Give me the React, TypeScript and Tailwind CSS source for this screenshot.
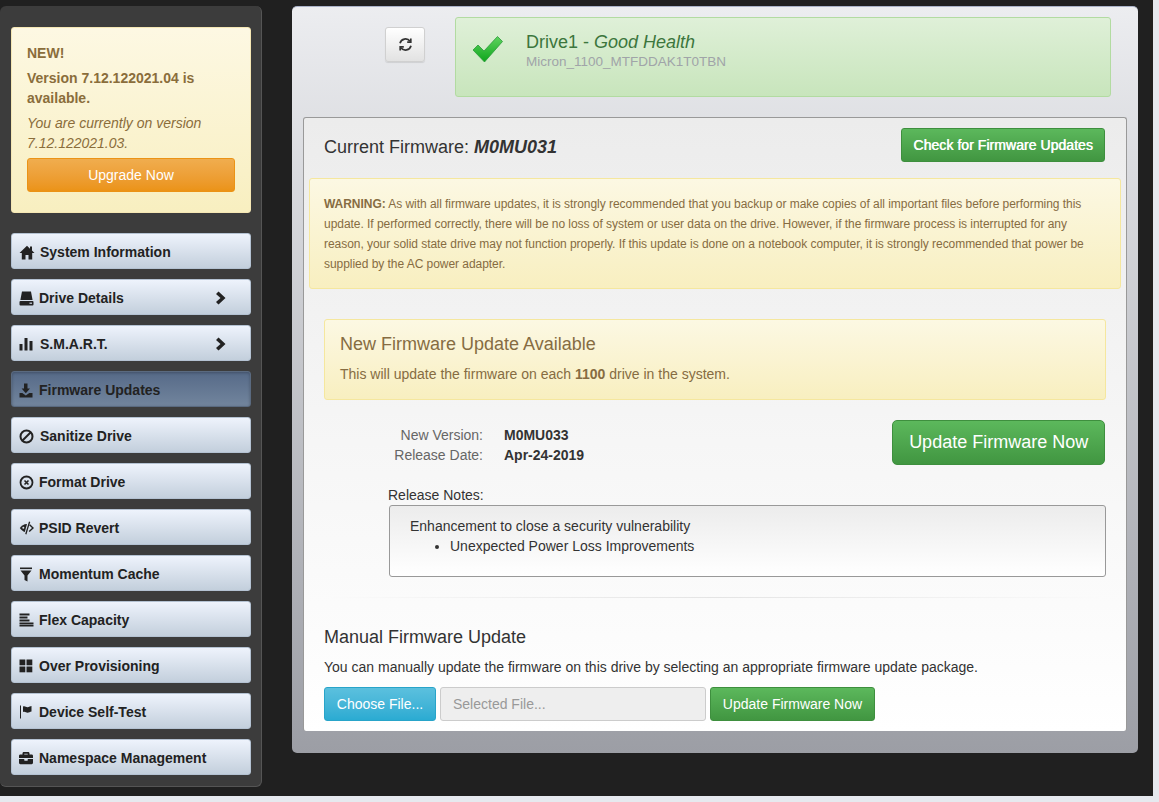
import React from "react";
import { FaBriefcase } from "react-icons/fa";

const Home = () => (
  <svg width="16" height="15" viewBox="0 0 16 15" fill="#222"><path d="M8 0.800L0.500 8h2.300v6.500h3.700V10h3v4.500h3.700V8h2.300l-2.500-2.400V1.500h-2v2.200z" /></svg>
);
const Hdd = () => (
  <svg width="15" height="15" viewBox="0 0 15 15" fill="#222"><path d="M3 0.500h9l1.600 8.500H1.400z" /><rect x="0.500" y="10" width="14" height="4.500" rx="1" /><rect x="10.500" y="11.600" width="2.500" height="1.200" fill="#cfd8e4" /></svg>
);
const Bars = () => (
  <svg width="14" height="14" viewBox="0 0 14 14" fill="#222"><rect x="0.500" y="7" width="3" height="6.500" /><rect x="5.500" y="1" width="3" height="12.500" /><rect x="10.500" y="4" width="3" height="9.500" /></svg>
);
const Download = () => (
  <svg width="14" height="15" viewBox="0 0 14 15" fill="#222"><path d="M5 0.500h3.500v5H11L6.800 10.300 2.600 5.500H5z" /><path d="M0.500 10h2.800l3.500 2.600L10.300 10h3.200v4.500H.5z" /></svg>
);
const Ban = () => (
  <svg width="15" height="15" viewBox="0 0 15 15" fill="none" stroke="#222" strokeWidth="2"><circle cx="7.500" cy="7.500" r="6" /><path d="M11.500 3.500l-8 8" /></svg>
);
const XCircle = () => (
  <svg width="15" height="15" viewBox="0 0 15 15" fill="none" stroke="#222"><circle cx="7.500" cy="7.500" r="6" strokeWidth="1.800" /><path d="M5.500 5.500l4 4M9.500 5.500l-4 4" strokeWidth="1.600" /></svg>
);
const EyeSlash = () => (
  <svg width="15" height="14" viewBox="0 0 15 14" fill="none" stroke="#222"><path d="M8 3C4.800 3 2.500 5 0.800 7 2.500 9 4 10.500 5.800 11z" fill="#222" stroke="none" /><circle cx="4.300" cy="6.800" r="1" fill="#dbe3ec" stroke="none" /><path d="M10.600 3.800L14 7l-3.800 3.600" strokeWidth="1.400" /><path d="M10.600 0.800L6.800 13.200" strokeWidth="1.300" /></svg>
);
const Filter = () => (
  <svg width="14" height="15" viewBox="0 0 14 15" fill="#222"><rect x="1" y="0.500" width="12" height="1.600" /><path d="M1.500 3.500h11L8.500 8.500v6l-3-1.500V8.500z" /></svg>
);
const AlignLeft = () => (
  <svg width="15" height="14" viewBox="0 0 15 14" fill="#222"><rect x="0.500" y="0.500" width="10" height="2" /><rect x="0.500" y="3.500" width="8" height="2" /><rect x="0.500" y="6.500" width="10" height="2" /><rect x="0.500" y="9.500" width="14" height="2" /><rect x="0.500" y="12" width="14" height="1.500" /></svg>
);
const Grid = () => (
  <svg width="14" height="14" viewBox="0 0 14 14" fill="#222"><rect x="0.500" y="0.500" width="5.800" height="5.800" /><rect x="7.500" y="0.500" width="5.800" height="5.800" /><rect x="0.500" y="7.500" width="5.800" height="5.800" /><rect x="7.500" y="7.500" width="5.800" height="5.800" /></svg>
);
const Flag = () => (
  <svg width="14" height="14" viewBox="0 0 14 14" fill="#222"><rect x="1" y="0.500" width="1" height="13" /><path d="M4 1.500C6 0.500 7 2.300 8.500 2.200S11.500 1 12.500 1v5.500c-1.500.2-2.500 1.200-4 1.200S6 6 4 7z" /></svg>
);
const Chevron = () => (
  <svg width="12" height="14" viewBox="0 0 12 14" fill="#222" className="ml-auto mr-[23px]"><path d="M3.500 0.500L10.500 7l-7 6.500L1 11l4.500-4L1 3z" /></svg>
);
const Refresh = () => (
  <svg width="15" height="15" viewBox="0 0 15 15" fill="none" stroke="#333" strokeWidth="1.700"><path d="M2 6.200A5.600 5.600 0 0 1 12 4.300" /><path d="M13 8.800A5.600 5.600 0 0 1 3 10.700" /><path d="M12.800 1.500v3.700H9.200" /><path d="M2.200 13.500V9.800h3.600" /></svg>
);
const Check = () => (
  <svg width="32" height="28" viewBox="0 0 32 28"><defs><linearGradient id="chk" x1="0" y1="0" x2="0" y2="1"><stop offset="0" stopColor="#5fd35f" /><stop offset="1" stopColor="#0da51b" /></linearGradient></defs><path d="M1 15l5-5 6 6L25.500 1.500l5 5L12.500 27z" fill="url(#chk)" stroke="#2a9a3a" strokeWidth="0.800" /></svg>
);

const items: [string, React.ReactNode, boolean?, boolean?, boolean?][] = [
  ["System Information", <Home />, false, false, true],
  ["Drive Details", <Hdd />, true],
  ["S.M.A.R.T.", <Bars />, true, false, true],
  ["Firmware Updates", <Download />, false, true],
  ["Sanitize Drive", <Ban />, false, false, true],
  ["Format Drive", <XCircle />],
  ["PSID Revert", <EyeSlash />],
  ["Momentum Cache", <Filter />],
  ["Flex Capacity", <AlignLeft />],
  ["Over Provisioning", <Grid />],
  ["Device Self-Test", <Flag />],
  ["Namespace Management", <FaBriefcase size={14} color="#222" />],
];

export default function App() {
  return (
    <div className="w-[1159px] h-[802px] overflow-hidden bg-[#e6e9ef] font-['Liberation_Sans',Arial,sans-serif]">
      <div className="w-[1153px] h-[796px] bg-[#202020] flex items-start pt-[6px]">
        {/* Sidebar */}
        <aside className="w-[262px] h-[781px] shrink-0 bg-[#3c3c3c] rounded-b-md rounded-t-md border-b border-r border-[#555] pl-[11px] pt-[21px]">
          <div className="w-[240px] h-[186px] rounded-[3px] border border-[#f5e7b4] bg-gradient-to-b from-[#fdf8e3] to-[#f8efc0] px-[15px] pt-[15px] text-[14px] leading-[20px] text-[#8a6d3b]">
            <p className="font-bold mb-[5px]">NEW!</p>
            <p className="font-bold mb-[5px]">Version 7.12.122021.04 is available.</p>
            <p className="italic">You are currently on version 7.12.122021.03.</p>
            <button className="mt-[5px] w-[208px] h-[34px] rounded-[3px] border border-[#eb9316] bg-gradient-to-b from-[#f0ad4e] to-[#eb9316] text-white text-[14px]">Upgrade Now</button>
          </div>
          <nav className="mt-[20px] flex flex-col gap-[10px]">
            {items.map(([label, icon, chevron, active, shifted]) => (
              <div
                key={label}
                className={
                  active
                    ? "w-[240px] h-[36px] flex items-center pl-[7px] pt-[2px] rounded-[3px] border border-[#5a6a80] bg-gradient-to-b from-[#566a88] to-[#72859d] shadow-[inset_0_1px_3px_rgba(0,0,0,0.25)] text-[14px] font-bold text-[#222]"
                    : "w-[240px] h-[36px] flex items-center pl-[7px] pt-[2px] rounded-[3px] border border-[#b4c2d2] bg-gradient-to-b from-[#eef3fc] to-[#c3cfdc] text-[14px] font-bold text-[#222]"
                }
              >
                <span className="w-[20px] flex justify-start shrink-0">{icon}</span>
                <span className={shifted ? "ml-px" : ""}>{label}</span>
                {chevron && <Chevron />}
              </div>
            ))}
          </nav>
        </aside>

        {/* Main panel */}
        <main className="ml-[30px] w-[846px] h-[747px] shrink-0 rounded-[5px] border-t border-[#aab2c8] bg-gradient-to-b from-[#ecedf0] to-[#9c9ea5] px-[11px] pt-[10px]">
          <div className="flex items-start">
            <button className="ml-[82px] mt-[10px] w-[40px] h-[35px] rounded-[3px] border border-[#d0d0d0] bg-gradient-to-b from-[#fff] to-[#e2e2e2] flex items-center justify-center shadow-[0_1px_1px_rgba(0,0,0,0.1)]"><Refresh /></button>
            <div className="ml-[30px] w-[656px] h-[80px] rounded-[3px] border border-[#b2dba1] bg-gradient-to-b from-[#dff0d8] to-[#c8e5bc] flex pl-[16px]">
              <div className="mt-[17px]"><Check /></div>
              <div className="ml-[22px] pt-[14px]">
                <div className="text-[18px] leading-[20px] text-[#3c763d]">Drive1 - <span className="italic">Good Health</span></div>
                <div className="text-[13.5px] leading-[20px] text-[#a0a4a8]">Micron_1100_MTFDDAK1T0TBN</div>
              </div>
            </div>
          </div>

          <section className="mt-[20px] w-[824px] h-[614px] rounded-[3px] border border-t-[#999] border-x-[#999] border-b-0 bg-gradient-to-b from-[#ececec] to-[#ffffff]">
            <div className="flex items-start justify-between pl-[20px] pr-[21px] pt-[10px]">
              <h2 className="text-[18px] leading-[34px] pt-[2px] text-[#333]">Current Firmware: <b className="italic">M0MU031</b></h2>
              <button className="w-[204px] h-[34px] rounded-[3px] border border-[#3e8f3e] bg-gradient-to-b from-[#5cb85c] to-[#419641] text-white text-[14px] tracking-[0.05px] [text-shadow:0.5px_0_0_#fff]">Check for Firmware Updates</button>
            </div>

            <div className="mt-[14px] mx-[5px] h-[111px] rounded-[3px] border border-[#f5e79e] bg-gradient-to-b from-[#fcf8e3] to-[#f8efc0] px-[14px] pt-[15px] text-[12px] leading-[20px] tracking-[-0.045px] text-[#866c42]">
              <b>WARNING:</b> As with all firmware updates, it is strongly recommended that you backup or make copies of all important files before performing this update. If performed correctly, there will be no loss of system or user data on the drive. However, if the firmware process is interrupted for any reason, your solid state drive may not function properly. If this update is done on a notebook computer, it is strongly recommended that power be supplied by the AC power adapter.
            </div>

            <div className="mt-[30px] ml-[20px] w-[782px] h-[81px] rounded-[3px] border border-[#f5e79e] bg-gradient-to-b from-[#fcf8e3] to-[#f8efc0] px-[15px] pt-[14px] text-[#866c42]">
              <h3 className="text-[18px] leading-[20px]">New Firmware Update Available</h3>
              <p className="mt-[10px] text-[14px] leading-[20px]">This will update the firmware on each <b>1100</b> drive in the system.</p>
            </div>

            <div className="flex mt-[20px] ml-[20px]">
              <div className="w-[159px] pt-[5px] text-right text-[14px] leading-[20px] text-[#666]">
                <div>New Version:</div>
                <div>Release Date:</div>
              </div>
              <div className="ml-[21px] pt-[5px] text-[14px] leading-[20px] font-bold text-[#333]">
                <div>M0MU033</div>
                <div>Apr-24-2019</div>
              </div>
              <button className="ml-[308px] w-[213px] h-[45px] rounded-[5px] border border-[#3e8f3e] bg-gradient-to-b from-[#5cb85c] to-[#419641] text-white text-[18px]">Update Firmware Now</button>
            </div>

            <div className="ml-[84px] mt-[20px] text-[14px] leading-[20px] text-[#333]">Release Notes:</div>
            <div className="ml-[85px] w-[717px] h-[72px] rounded-[3px] border border-[#999] bg-gradient-to-b from-[#ececec] to-[#ffffff] pl-[20px] pt-[10px] text-[14px] leading-[20px] text-[#333]">
              <div>Enhancement to close a security vulnerability</div>
              <ul className="list-disc pl-[40px]"><li>Unexpected Power Loss Improvements</li></ul>
            </div>

            <div className="mt-[20px] mx-[20px] h-px bg-gradient-to-r from-transparent via-[#e4e4e4] to-transparent" />

            <div className="pl-[20px] pt-[29px]">
              <h3 className="text-[18px] leading-[20px] text-[#333]">Manual Firmware Update</h3>
              <p className="mt-[10px] text-[14px] leading-[20px] text-[#333]">You can manually update the firmware on this drive by selecting an appropriate firmware update package.</p>
              <div className="mt-[10px] flex gap-[4px] text-[14px]">
                <button className="w-[112px] h-[34px] rounded-[3px] border border-[#28a4c9] bg-gradient-to-b from-[#5bc0de] to-[#2aabd2] text-white">Choose File...</button>
                <div className="w-[266px] h-[34px] rounded-[3px] border border-[#ccc] bg-[#eee] flex items-center pl-[12px] text-[#999]">Selected File...</div>
                <button className="w-[165px] h-[34px] rounded-[3px] border border-[#3e8f3e] bg-gradient-to-b from-[#5cb85c] to-[#419641] text-white">Update Firmware Now</button>
              </div>
            </div>
          </section>
        </main>
      </div>
    </div>
  );
}
